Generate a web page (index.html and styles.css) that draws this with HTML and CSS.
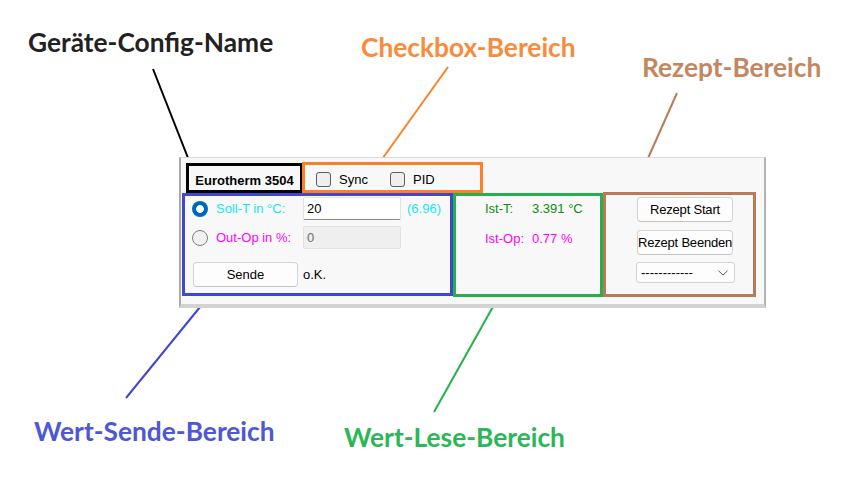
FILE: index.html
```html
<!DOCTYPE html>
<html lang="de">
<head>
<meta charset="utf-8">
<title>Geräte-Panel</title>
<link rel="stylesheet" href="styles.css">
</head>
<body>
<div class="canvas">
  <svg class="leaders" width="868" height="482" viewBox="0 0 868 482">
    <line x1="153" y1="69" x2="190" y2="163" stroke="#000000" stroke-width="2"/>
    <line x1="448" y1="67" x2="380" y2="162" stroke="#ff7f27" stroke-width="2"/>
    <line x1="677" y1="93" x2="633" y2="192" stroke="#b97a57" stroke-width="2"/>
    <line x1="209" y1="296" x2="126" y2="398" stroke="#3f48cc" stroke-width="2"/>
    <line x1="499" y1="296" x2="434" y2="412" stroke="#22b14c" stroke-width="2"/>
  </svg>

  <div class="note note-name">Geräte-Config-Name</div>
  <div class="note note-check">Checkbox-Bereich</div>
  <div class="note note-rezept">Rezept-Bereich</div>
  <div class="note note-send">Wert-Sende-Bereich</div>
  <div class="note note-read">Wert-Lese-Bereich</div>

  <div class="window">
    <div class="head">
      <div class="box box-black name">Eurotherm 3504</div>
      <div class="box box-orange checks">
        <div class="chk"><span class="cb"></span><span>Sync</span></div>
        <div class="chk"><span class="cb"></span><span>PID</span></div>
      </div>
    </div>
    <div class="main">
      <div class="box box-blue send">
        <span class="radio on"></span>
        <span class="cyan">Soll-T in °C:</span>
        <div class="field">20</div>
        <span class="cyan hint">(6.96)</span>

        <span class="radio"></span>
        <span class="magenta">Out-Op in %:</span>
        <div class="field disabled">0</div>
        <span></span>

        <div class="btn sende">Sende</div>
        <span class="ok">o.K.</span>
      </div>
      <div class="box box-green read">
        <span class="green">Ist-T:</span><span class="green">3.391 °C</span>
        <span class="magenta">Ist-Op:</span><span class="magenta">0.77 %</span>
      </div>
      <div class="box box-brown rezept">
        <div class="btn rbtn">Rezept Start</div>
        <div class="btn rbtn">Rezept Beenden</div>
        <div class="select">
          <span>------------</span>
          <svg class="chev" width="10" height="6" viewBox="0 0 10 6"><path d="M0.5 0.8 L5 5 L9.5 0.8" fill="none" stroke="#5a5a5a" stroke-width="1"/></svg>
        </div>
      </div>
    </div>
  </div>
</div>
</body>
</html>
```

FILE: styles.css
```css
* { box-sizing: border-box; }
html, body { margin: 0; padding: 0; background: #ffffff; }
body { font-family: "Liberation Sans", Arial, sans-serif; font-size: 13px; color: #000; }

.canvas { position: relative; width: 868px; height: 482px; overflow: hidden; background: #ffffff; }

.leaders { position: absolute; left: 0; top: 0; }

.note {
  position: absolute;
  font-family: Lato, "Open Sans", sans-serif;
  font-weight: 700;
  font-size: 27px;
  line-height: 27px;
  white-space: nowrap;
  transform-origin: 0 0;
  transform: scaleX(0.975);
}
.note-name { left: 28px; top: 28px; color: #222222; }
.note-check { left: 361px; top: 33px; color: #f98b3d; }
.note-rezept { left: 642px; top: 53px; color: #c28762; }
.note-send { left: 34px; top: 417px; color: #4d58d2; }
.note-read { left: 344px; top: 423px; color: #2db657; }

.window {
  position: absolute;
  left: 179px;
  top: 157px;
  width: 587px;
  height: 151px;
  background: #f8f8f8;
  border-left: 2px solid #a9a9a9;
  border-right: 2px solid #b4b4b4;
  border-top: 1px solid #dadada;
  border-bottom: 4px solid #d3d3d3;
}

.box { border: 3px solid; }
.box-black { border-color: #000000; }
.box-orange { border-color: #ff7f27; }
.box-blue { border-color: #3f48cc; }
.box-green { border-color: #22b14c; }
.box-brown { border-color: #b97a57; }

.head { display: flex; align-items: flex-start; padding-left: 5px; height: 35px; }
.name {
  margin-top: 5px;
  width: 117px;
  height: 30px;
  font-weight: 700;
  text-align: center;
  padding-top: 7px;
  line-height: 16px;
}
.checks {
  margin-top: 4px;
  margin-left: -1px;
  width: 181px;
  height: 31px;
  display: flex;
  padding: 7px 0 0 11px;
}
.chk { display: flex; align-items: center; width: 74px; height: 15px; line-height: 15px; }
.cb {
  width: 15px; height: 15px;
  border: 1px solid #5d5d5d;
  border-radius: 3px;
  background: #efefef;
  margin-right: 8px;
  flex: none;
}

.main { display: flex; align-items: flex-start; padding-left: 1px; }

.send {
  width: 271px;
  height: 103px;
  display: grid;
  grid-template-columns: 24px 87px 98px 1fr;
  grid-template-rows: 23px 23px 32px;
  row-gap: 6px;
  padding: 1px 0 0 7px;
  align-items: center;
}
.radio {
  width: 16px; height: 16px;
  border-radius: 50%;
  border: 1px solid #7e7e7e;
  background: #f1f1f1;
}
.radio.on {
  border: none;
  background: radial-gradient(circle, #ffffff 0 3.6px, #0067c0 4.1px);
}
.cyan { color: #19e6ef; }
.magenta { color: #ff00ff; }
.green { color: #108a10; }
.hint { margin-left: 6px; }
.field {
  height: 23px;
  background: #ffffff;
  border: 1px solid #e3e3e3;
  border-bottom-color: #8a8a8a;
  border-radius: 2px;
  padding-left: 3px;
  line-height: 21px;
}
.field.disabled { background: #efefef; border-color: #e2e2e2; color: #6d6d6d; }

.btn {
  background: #fdfdfd;
  border: 1px solid #d3d3d3;
  border-bottom-color: #c4c4c4;
  border-radius: 4px;
  text-align: center;
}
.sende {
  grid-column: 1 / 3;
  align-self: end;
  width: 105px;
  height: 25px;
  margin-left: 1px;
  line-height: 23px;
}
.ok { align-self: end; line-height: 25px; }

.read {
  width: 150px;
  height: 104px;
  display: grid;
  grid-template-columns: 47px auto;
  grid-auto-rows: 16px;
  row-gap: 14px;
  align-content: start;
  padding: 5px 0 0 29px;
  line-height: 16px;
  white-space: nowrap;
}

.rezept {
  width: 153px;
  height: 105px;
  margin-top: -1px;
  display: flex;
  flex-direction: column;
  align-items: flex-start;
  padding: 2px 0 0 31px;
}
.rbtn { width: 96px; height: 25px; line-height: 23px; margin-bottom: 8px; white-space: nowrap; letter-spacing: -0.2px; }
.rbtn + .rbtn { margin-bottom: 7px; }
.select {
  width: 99px;
  height: 21px;
  margin-left: -1px;
  background: #fdfdfd;
  border: 1px solid #d3d3d3;
  border-radius: 3px;
  display: flex;
  align-items: center;
  justify-content: space-between;
  padding: 0 6px 0 4px;
  line-height: 19px;
}
.chev { margin-top: 1px; }
```
